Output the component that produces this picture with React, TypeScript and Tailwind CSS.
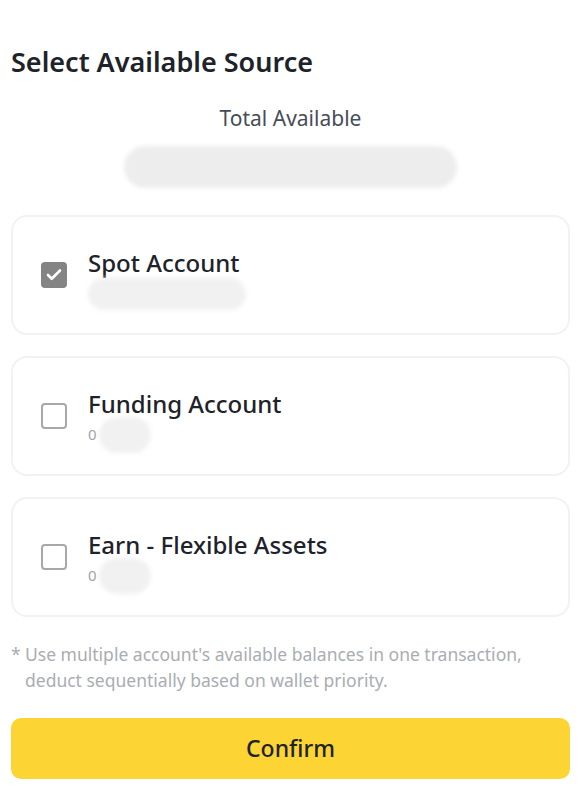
import { Check } from "lucide-react";

const accounts = [
  { name: "Spot Account", checked: true, zero: false },
  { name: "Funding Account", checked: false, zero: true },
  { name: "Earn - Flexible Assets", checked: false, zero: true },
];

export default function App() {
  return (
    <div
      className="w-[581px] h-[789px] bg-white px-[11px] overflow-hidden"
      style={{ fontFamily: "'Noto Sans', Inter, sans-serif" }}
    >
      {/* Title */}
      <h1 className="pt-[42px] text-[27px] leading-[40px] font-semibold text-[#1e2329]">
        Select Available Source
      </h1>

      {/* Total */}
      <div className="mt-[22px] flex flex-col items-center">
        <p className="text-[21px] leading-[28px] text-[#474d57]">Total Available</p>
        <div className="mt-[14px] h-[42px] w-[333px] rounded-full bg-[#ededed] blur-[2px]" />
      </div>

      {/* Accounts */}
      <div className="mt-[27px] flex flex-col gap-[21px]">
        {accounts.map((a) => (
          <div
            key={a.name}
            className="h-[120px] rounded-[16px] border-2 border-[#f2f2f2] flex items-center pl-[28px]"
          >
            {a.checked ? (
              <div className="w-[26px] h-[26px] rounded-[4px] bg-[#848484] flex items-center justify-center">
                <Check className="w-[18px] h-[18px] text-white" strokeWidth={3.5} />
              </div>
            ) : (
              <div className="w-[26px] h-[26px] rounded-[4px] border-2 border-[#a8a8a8]" />
            )}
            <div className="ml-[21px] pt-[5px] flex flex-col">
              <span className="text-[24px] leading-[30px] font-medium text-[#1e2329]">
                {a.name}
              </span>
              <div className="mt-[2px] h-[28px] flex items-center">
                {a.zero ? (
                  <>
                    <span className="text-[15px] text-[#a0a4aa]">0</span>
                    <div className="ml-[2px] h-[36px] w-[52px] rounded-full bg-[#f1f1f1] blur-[2px]" />
                  </>
                ) : (
                  <div className="h-[32px] w-[158px] rounded-full bg-[#f1f1f1] blur-[2px]" />
                )}
              </div>
            </div>
          </div>
        ))}
      </div>

      {/* Note */}
      <div className="mt-[24px] flex text-[17.5px] leading-[26px] text-[#a9adb3]">
        <span className="w-[14px] shrink-0">*</span>
        <p>
          Use multiple account's available balances in one transaction,
          <br />
          deduct sequentially based on wallet priority.
        </p>
      </div>

      {/* Confirm */}
      <button className="mt-[25px] w-full h-[61px] rounded-[10px] bg-[#fcd535] text-[23px] font-medium text-[#1e2329]">
        Confirm
      </button>
    </div>
  );
}
